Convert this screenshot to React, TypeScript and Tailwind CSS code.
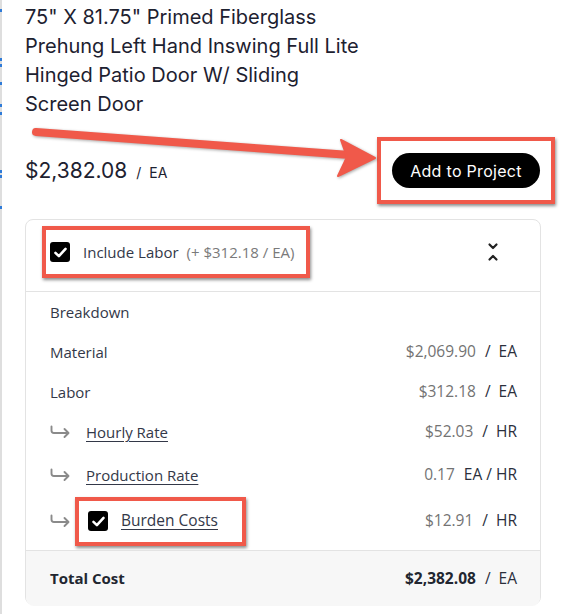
import React from "react";

const RED = "#f0594a";

function Check({ size = 20 }: { size?: number }) {
  return (
    <div className="flex items-center justify-center rounded-[3px] bg-black shrink-0" style={{ width: size, height: size }}>
      <svg width="15" height="15" viewBox="0 0 14 14" fill="none">
        <path d="M2.3 7.4 L5.5 10.4 L11.7 3.6" stroke="white" strokeWidth="2.4" strokeLinecap="round" strokeLinejoin="round" />
      </svg>
    </div>
  );
}

function Hook() {
  return (
    <svg width="21" height="14" viewBox="0 0 21 14" fill="none" className="shrink-0">
      <path d="M1.5 1.5 V5.5 Q1.5 8 4 8 H18" stroke="#8a8a8a" strokeWidth="1.9" strokeLinecap="round" />
      <path d="M14.5 4 L18.5 8 L14.5 12" stroke="#8a8a8a" strokeWidth="1.9" strokeLinecap="round" strokeLinejoin="round" />
    </svg>
  );
}

function Value({ v, unit, bold = false }: { v: string; unit: string; bold?: boolean }) {
  return (
    <div className="flex items-center text-[15.5px]">
      <span className={bold ? "font-bold text-[#222630]" : "text-[#737373]"}>{v}</span>
      <span className="text-[#2b2f3c] ml-[9px]">/</span>
      <span className="text-[#2b2f3c] ml-[8px]">{unit}</span>
    </div>
  );
}

export default function App() {
  const blueMarks = [9, 58, 64, 82, 104, 112, 170, 175, 206];
  return (
    <div className="relative w-[562px] h-[614px] bg-white overflow-hidden" style={{ fontFamily: "'Open Sans', 'Liberation Sans', sans-serif" }}>
      {/* left edge of neighbouring panel */}
      <div className="absolute left-0 top-0 h-full w-[2px] bg-[#dedede]">
        {blueMarks.map((y) => (
          <div key={y} className="absolute left-0 w-[2px] h-[3px] bg-[#2f7bd8]" style={{ top: y }} />
        ))}
      </div>

      <div className="pl-[25px] pr-[21px]">
        <h1 className="mt-[3px] text-[20px] leading-[29px] text-[#1d2130] font-normal" style={{ fontFamily: "Inter, 'Open Sans', sans-serif" }}>
          75" X 81.75" Primed Fiberglass
          <br />
          Prehung Left Hand Inswing Full Lite
          <br />
          Hinged Patio Door W/ Sliding
          <br />
          Screen Door
        </h1>

        <div className="mt-[18px] flex items-center justify-between mr-[-14px]">
          <div className="flex items-baseline text-[#1d2130]" style={{ fontFamily: "Inter, 'Open Sans', sans-serif" }}>
            <span className="text-[21px]">$2,382.08</span>
            <span className="text-[14px] ml-[9px]">/</span>
            <span className="text-[14px] ml-[8px]">EA</span>
          </div>
          <div className="border-4 px-[11px] py-[12px] shadow-[1px_2px_3px_rgba(0,0,0,0.45)]" style={{ borderColor: RED }}>
            <button className="h-[35px] w-[148px] rounded-full bg-black text-white text-[16px] tracking-[0.3px]" style={{ fontFamily: "Inter, 'Open Sans', sans-serif" }}>
              Add to Project
            </button>
          </div>
        </div>

        <div className="mt-[15px] h-[386px] rounded-[8px] border border-[#e3e3e3] flex flex-col">
          <div className="h-[72px] shrink-0 border-b border-[#e3e3e3] flex items-center justify-between pl-[16px] pr-[41px] pb-[7px]">
            <div className="h-[52px] border-4 flex items-center pl-[4px] pr-[12px] shadow-[1px_2px_3px_rgba(0,0,0,0.45)]" style={{ borderColor: RED }}>
              <Check />
              <span className="ml-[13px] text-[15px] text-[#333848]">Include Labor</span>
              <span className="ml-[8px] text-[15px] text-[#7a7a7a]">(+ $312.18 / EA)</span>
            </div>
            <svg width="12" height="20" viewBox="0 0 12 20" fill="none">
              <path d="M2.5 2.5 L6 6 L9.5 2.5" stroke="#222" strokeWidth="2.2" strokeLinecap="round" strokeLinejoin="round" />
              <path d="M2.5 17.5 L6 14 L9.5 17.5" stroke="#222" strokeWidth="2.2" strokeLinecap="round" strokeLinejoin="round" />
            </svg>
          </div>

          <div className="flex-1 flex flex-col pl-[24px] pr-[23px] pb-[6px] text-[15px] text-[#333848]">
            <div className="h-[40px] flex items-center">Breakdown</div>
            <div className="h-[40px] flex items-center justify-between">
              <span>Material</span>
              <Value v="$2,069.90" unit="EA" />
            </div>
            <div className="h-[40px] flex items-center justify-between">
              <span>Labor</span>
              <Value v="$312.18" unit="EA" />
            </div>
            <div className="h-[40px] flex items-center justify-between">
              <div className="flex items-center">
                <Hook />
                <span className="ml-[15px] underline underline-offset-[3px]">Hourly Rate</span>
              </div>
              <Value v="$52.03" unit="HR" />
            </div>
            <div className="h-[46px] flex items-center justify-between">
              <div className="flex items-center">
                <Hook />
                <span className="ml-[15px] underline underline-offset-[3px]">Production Rate</span>
              </div>
              <div className="flex items-center text-[15.5px]">
                <span className="text-[#737373]">0.17</span>
                <span className="ml-[9px] text-[#2b2f3c]">EA / HR</span>
              </div>
            </div>
            <div className="h-[46px] flex items-center justify-between">
              <div className="flex items-center">
                <Hook />
                <div className="ml-[4px] h-[49px] border-4 flex items-center pl-[9px] pr-[24px] shadow-[1px_2px_3px_rgba(0,0,0,0.45)] bg-white" style={{ borderColor: RED }}>
                  <Check />
                  <span className="ml-[13px] underline underline-offset-[3px] text-[15.5px]">Burden Costs</span>
                </div>
              </div>
              <Value v="$12.91" unit="HR" />
            </div>
          </div>

          <div className="h-[56px] shrink-0 border-t border-[#e3e3e3] bg-[#f7f7f7] rounded-b-[8px] flex items-center justify-between pl-[24px] pr-[23px]">
            <span className="text-[15px] font-bold text-[#222630]">Total Cost</span>
            <Value v="$2,382.08" unit="EA" bold />
          </div>
        </div>
      </div>

      {/* annotation arrow */}
      <svg className="absolute left-0 top-0 pointer-events-none" width="562" height="220" viewBox="0 0 562 220" style={{ filter: "drop-shadow(1px 1.5px 1.5px rgba(0,0,0,0.35))" }}>
        <line x1="36" y1="132" x2="350" y2="155" stroke={RED} strokeWidth="8" strokeLinecap="round" />
        <path d="M341 140 L375 158 L338 176 L347 157 Z" fill={RED} stroke={RED} strokeWidth="2" strokeLinejoin="round" />
      </svg>
    </div>
  );
}
